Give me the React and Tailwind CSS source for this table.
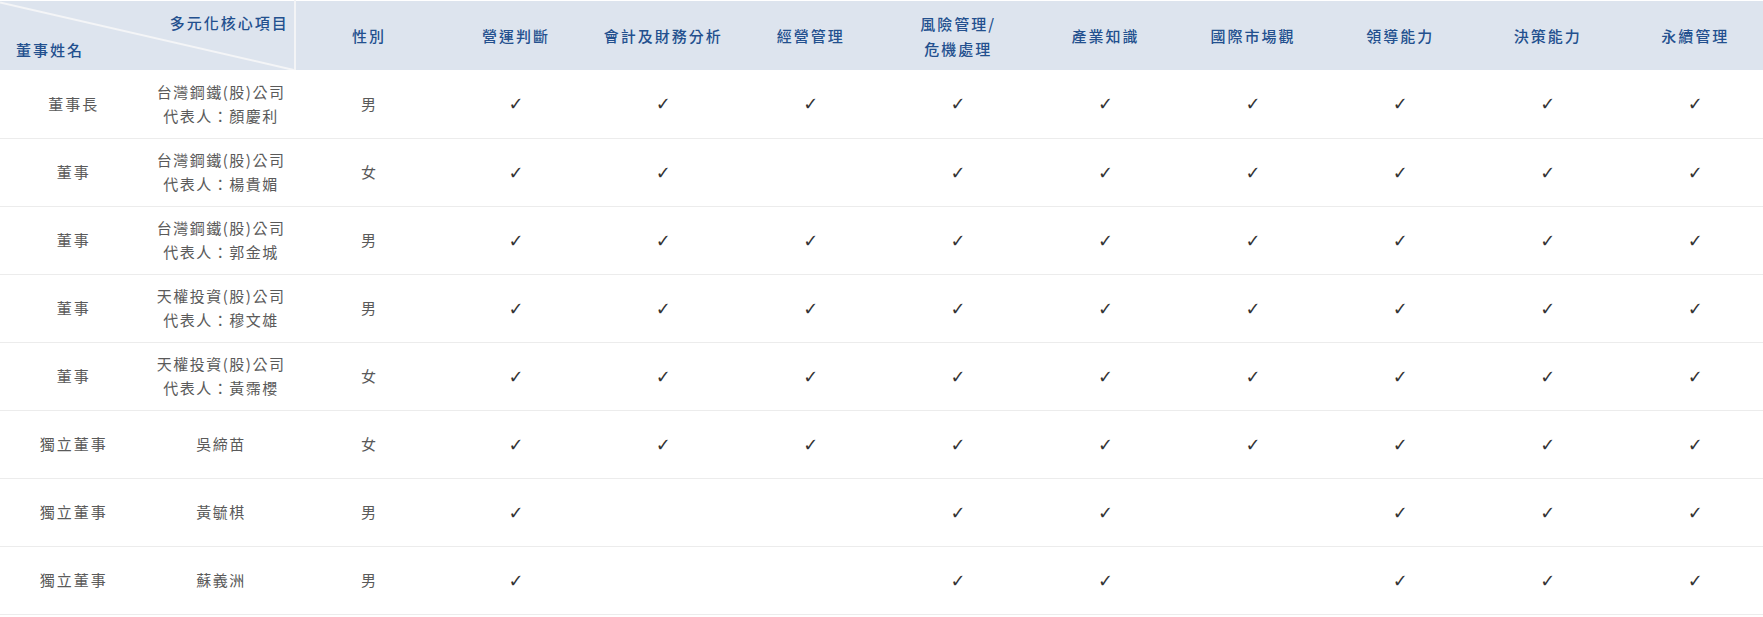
import React from "react";

const skills = [
  ["營運判斷"],
  ["會計及財務分析"],
  ["經營管理"],
  ["風險管理/", "危機處理"],
  ["產業知識"],
  ["國際市場觀"],
  ["領導能力"],
  ["決策能力"],
  ["永續管理"],
];

const ALL = [1, 1, 1, 1, 1, 1, 1, 1, 1];

const directors = [
  { title: "董事長", name: ["台灣鋼鐵(股)公司", "代表人：顏慶利"], gender: "男", marks: ALL },
  { title: "董事", name: ["台灣鋼鐵(股)公司", "代表人：楊貴媚"], gender: "女", marks: [1, 1, 0, 1, 1, 1, 1, 1, 1] },
  { title: "董事", name: ["台灣鋼鐵(股)公司", "代表人：郭金城"], gender: "男", marks: ALL },
  { title: "董事", name: ["天權投資(股)公司", "代表人：穆文雄"], gender: "男", marks: ALL },
  { title: "董事", name: ["天權投資(股)公司", "代表人：黃霈櫻"], gender: "女", marks: ALL },
  { title: "獨立董事", name: ["吳締苗"], gender: "女", marks: ALL },
  { title: "獨立董事", name: ["黃毓棋"], gender: "男", marks: [1, 0, 0, 1, 1, 0, 1, 1, 1] },
  { title: "獨立董事", name: ["蘇義洲"], gender: "男", marks: [1, 0, 0, 1, 1, 0, 1, 1, 1] },
];

const font = { fontFamily: '"Noto Sans CJK TC", "Noto Sans", sans-serif' };

export default function App() {
  return (
    <div className="w-full overflow-hidden bg-white" style={font}>
      <table className="w-[1769px] table-fixed border-collapse">
        <thead>
          <tr className="border-t border-white">
            <th
              colSpan={2}
              className="relative h-[69px] bg-[#dde4ee] border-r-2 border-[#f3f4f6] p-0 align-top font-medium"
            >
              <svg
                className="absolute inset-0 h-full w-full"
                viewBox="0 0 100 100"
                preserveAspectRatio="none"
              >
                <line
                  x1="0"
                  y1="2"
                  x2="100"
                  y2="100"
                  stroke="#f4f5f7"
                  strokeWidth="2"
                  vectorEffect="non-scaling-stroke"
                />
              </svg>
              <div className="relative flex h-[69px] flex-col justify-between pt-[11px] pb-[9px] text-[15px] leading-[22px] tracking-[2px] text-[#23508e]">
                <div className="pr-[5px] text-right">多元化核心項目</div>
                <div className="pl-4 text-left">董事姓名</div>
              </div>
            </th>
            <th className="bg-[#dde4ee] p-0 text-[15px] font-medium leading-[25px] tracking-[2px] text-[#23508e]">
              性別
            </th>
            {skills.map((s, i) => (
              <th
                key={i}
                className="bg-[#dde4ee] p-0 text-[15px] font-medium leading-[25px] tracking-[2px] text-[#23508e]"
              >
                {s.map((line, j) => (
                  <div key={j}>{line}</div>
                ))}
              </th>
            ))}
          </tr>
        </thead>
        <tbody>
          {directors.map((d, i) => (
            <tr key={i} className="border-b border-[#ececec]">
              <td className="h-[68px] p-0 text-center text-[15px] leading-[24px] tracking-[2px] text-[#5a5a5a]">
                {d.title}
              </td>
              <td className="p-0 text-center text-[15px] leading-[24px] tracking-[1.5px] text-[#5a5a5a]">
                {d.name.map((line, j) => (
                  <div key={j}>{line}</div>
                ))}
              </td>
              <td className="p-0 text-center text-[15px] leading-[24px] text-[#5a5a5a]">
                {d.gender}
              </td>
              {d.marks.map((m, j) => (
                <td
                  key={j}
                  className="p-0 text-center text-[18px] font-bold text-[#333333]"
                  style={{ fontFamily: '"DejaVu Sans", sans-serif' }}
                >
                  {m ? "✓" : ""}
                </td>
              ))}
            </tr>
          ))}
        </tbody>
      </table>
    </div>
  );
}
